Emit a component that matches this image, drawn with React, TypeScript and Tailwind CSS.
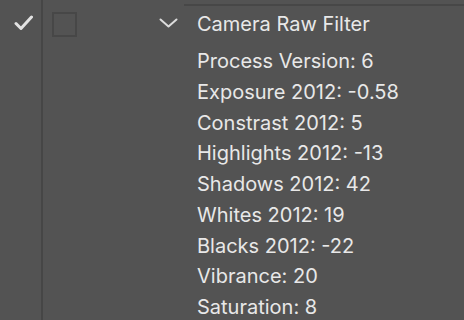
const params = [
  "Process Version: 6",
  "Exposure 2012: -0.58",
  "Constrast 2012: 5",
  "Highlights 2012: -13",
  "Shadows 2012: 42",
  "Whites 2012: 19",
  "Blacks 2012: -22",
  "Vibrance: 20",
  "Saturation: 8",
];

export default function App() {
  return (
    <div
      className="flex h-[320px] w-[464px] overflow-hidden bg-[#535353] text-[#e8e8e8]"
      style={{ fontFamily: "Inter, 'Liberation Sans', sans-serif" }}
    >
      {/* visibility column */}
      <div className="w-[43px] shrink-0 border-r-2 border-[#464646] pt-[15px] pl-[14px]">
        <svg width="19" height="16" viewBox="0 0 19 16" fill="none">
          <path
            d="M2 8.5 L7 13.5 L17.5 2"
            stroke="#e2e2e2"
            strokeWidth="3"
            strokeLinecap="round"
            strokeLinejoin="round"
          />
        </svg>
      </div>

      {/* toggle box */}
      <div className="w-[116px] shrink-0 pl-[9px] pt-[12px]">
        <div className="h-[25px] w-[25px] border-2 border-[#474747]" />
      </div>

      {/* chevron */}
      <div className="w-[25px] shrink-0 pt-[18px]">
        <svg width="19" height="10" viewBox="0 0 19 10" fill="none">
          <path
            d="M1.5 1.5 L9.5 8.5 L17.5 1.5"
            stroke="#dcdcdc"
            strokeWidth="2"
            strokeLinecap="round"
            strokeLinejoin="round"
          />
        </svg>
      </div>

      {/* filter content */}
      <div className="mt-[4px] flex-1 border-t-2 border-[#474747] pl-[13px] text-[20px]">
        <div className="pt-[3px] leading-[31px]">Camera Raw Filter</div>
        <div className="mt-[6px]">
          {params.map((p) => (
            <div key={p} className="leading-[30.75px]">
              {p}
            </div>
          ))}
        </div>
      </div>
    </div>
  );
}
